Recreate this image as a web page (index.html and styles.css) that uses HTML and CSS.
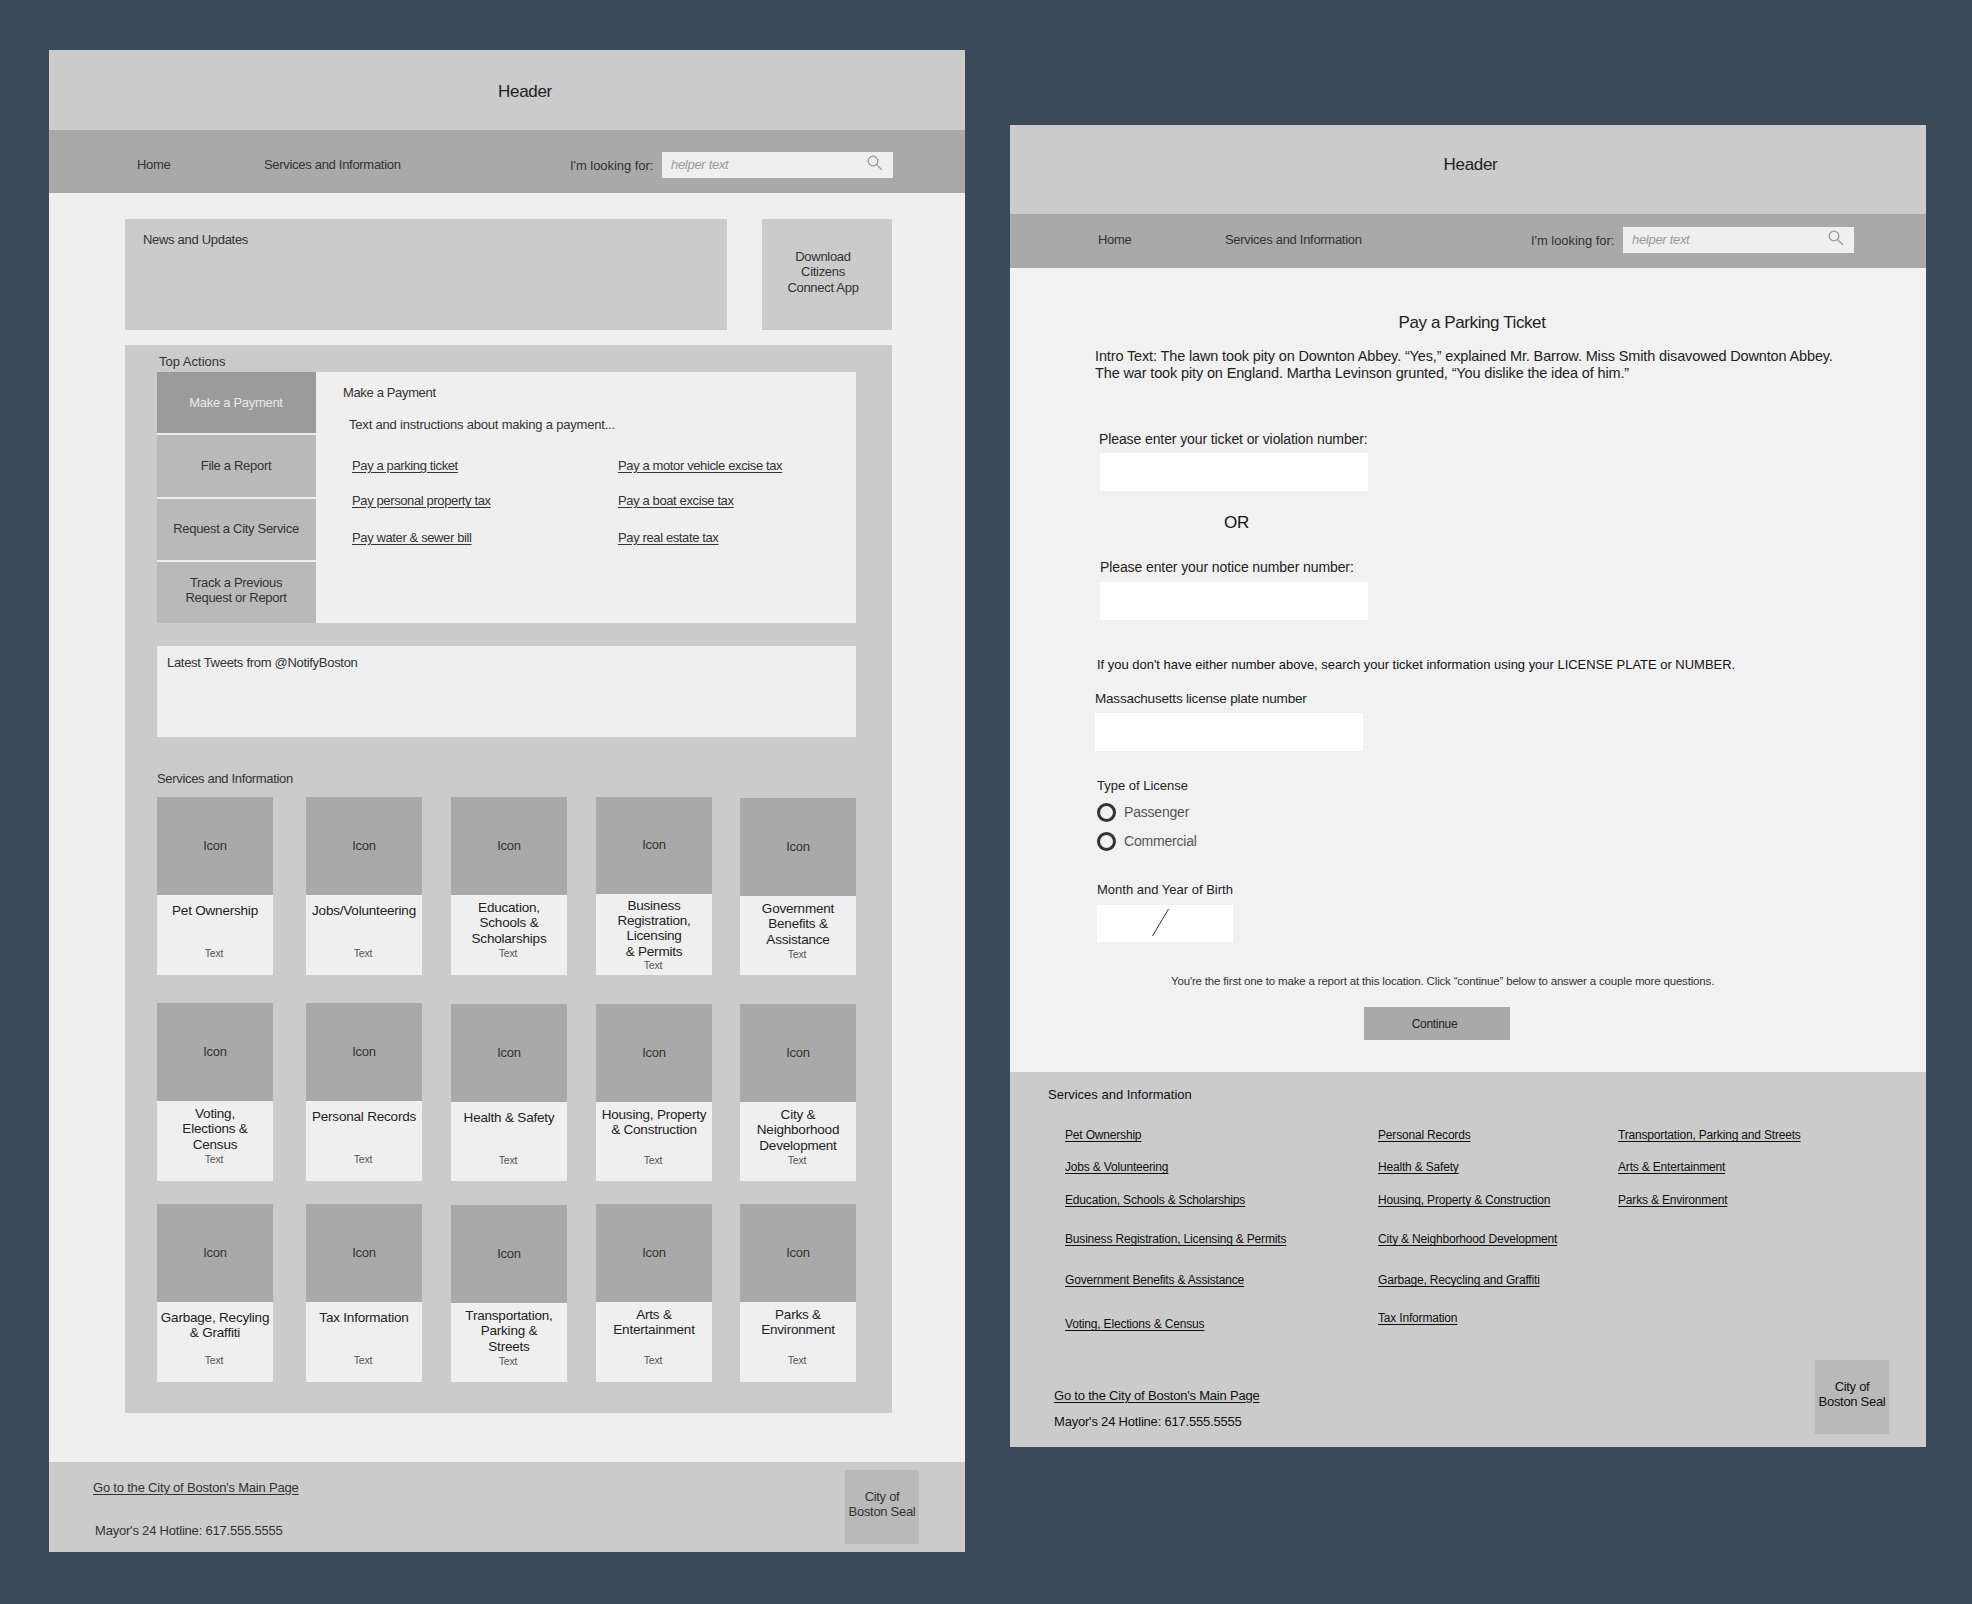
FILE: index.html
```html
<!doctype html>
<html lang="en">
    <head>
        <meta charset="UTF-8" />
        <meta name="viewport" content="width=device-width, initial-scale=1.0" />
        <title>City of Boston Wireframes</title>
        <link rel="stylesheet" href="styles.css">
    </head>
    <body>
        <!-- Home page -->
        <div class="page home">
            <header class="masthead">Header</header>
            <nav class="topnav">
                <a class="nav-home">Home</a>
                <a class="nav-services">Services and Information</a>
                <span class="nav-label">I'm looking for:</span>
                <div class="search">
                    <input type="text" placeholder="helper text" />
                    <svg width="16" height="16" viewBox="0 0 16 16">
                        <circle cx="6" cy="6" r="4.8" />
                        <line x1="9.5" y1="9.5" x2="15" y2="15" />
                    </svg>
                </div>
            </nav>

            <main class="home-main">
                <div class="promo-row">
                    <section class="news">News and Updates</section>
                    <section class="download">Download<br />Citizens<br />Connect App</section>
                </div>

                <section class="panel">
                    <h2 class="top-label">Top Actions</h2>
                    <div class="actions">
                        <div class="tabs">
                            <div class="tab active">Make a Payment</div>
                            <div class="tab">File a Report</div>
                            <div class="tab tab-request">Request a City Service</div>
                            <div class="tab tab-track">Track a Previous<br />Request or Report</div>
                        </div>
                        <div class="tab-pane">
                            <h3>Make a Payment</h3>
                            <p>Text and instructions about making a payment...</p>
                            <div class="pay-links">
                                <a>Pay a parking ticket</a>
                                <a>Pay personal property tax</a>
                                <a>Pay water &amp; sewer bill</a>
                                <a>Pay a motor vehicle excise tax</a>
                                <a>Pay a boat excise tax</a>
                                <a>Pay real estate tax</a>
                            </div>
                        </div>
                    </div>

                    <div class="tweets">Latest Tweets from @NotifyBoston</div>

                    <h2 class="services-label">Services and Information</h2>
                    <div class="cards">
                        <div class="card"><div class="icon">Icon</div><div class="card-body"><h4 class="one-line">Pet Ownership</h4><span>Text</span></div></div>
                        <div class="card"><div class="icon">Icon</div><div class="card-body"><h4 class="one-line">Jobs/Volunteering</h4><span>Text</span></div></div>
                        <div class="card"><div class="icon">Icon</div><div class="card-body"><h4>Education,<br />Schools &amp;<br />Scholarships</h4><span>Text</span></div></div>
                        <div class="card"><div class="icon">Icon</div><div class="card-body tall"><h4>Business<br />Registration,<br />Licensing<br />&amp; Permits</h4><span>Text</span></div></div>
                        <div class="card nudge"><div class="icon">Icon</div><div class="card-body"><h4>Government<br />Benefits &amp;<br />Assistance</h4><span>Text</span></div></div>

                        <div class="card"><div class="icon">Icon</div><div class="card-body"><h4>Voting,<br />Elections &amp;<br />Census</h4><span>Text</span></div></div>
                        <div class="card"><div class="icon">Icon</div><div class="card-body"><h4 class="one-line">Personal Records</h4><span>Text</span></div></div>
                        <div class="card nudge"><div class="icon">Icon</div><div class="card-body"><h4 class="one-line">Health &amp; Safety</h4><span>Text</span></div></div>
                        <div class="card nudge"><div class="icon">Icon</div><div class="card-body"><h4>Housing, Property<br />&amp; Construction</h4><span>Text</span></div></div>
                        <div class="card nudge"><div class="icon">Icon</div><div class="card-body"><h4>City &amp;<br />Neighborhood<br />Development</h4><span>Text</span></div></div>

                        <div class="card"><div class="icon">Icon</div><div class="card-body"><h4 class="one-line">Garbage, Recyling<br />&amp; Graffiti</h4><span>Text</span></div></div>
                        <div class="card"><div class="icon">Icon</div><div class="card-body"><h4 class="one-line">Tax Information</h4><span>Text</span></div></div>
                        <div class="card nudge"><div class="icon">Icon</div><div class="card-body"><h4>Transportation,<br />Parking &amp;<br />Streets</h4><span>Text</span></div></div>
                        <div class="card"><div class="icon">Icon</div><div class="card-body"><h4>Arts &amp;<br />Entertainment</h4><span>Text</span></div></div>
                        <div class="card"><div class="icon">Icon</div><div class="card-body"><h4>Parks &amp;<br />Environment</h4><span>Text</span></div></div>
                    </div>
                </section>
            </main>

            <footer class="home-footer">
                <div class="contact">
                    <a>Go to the City of Boston's Main Page</a>
                    <span class="hotline">Mayor's 24 Hotline: 617.555.5555</span>
                </div>
                <div class="seal">City of<br />Boston Seal</div>
            </footer>
        </div>

        <!-- Parking ticket page -->
        <div class="page ticket">
            <header class="masthead">Header</header>
            <nav class="topnav">
                <a class="nav-home">Home</a>
                <a class="nav-services">Services and Information</a>
                <span class="nav-label">I'm looking for:</span>
                <div class="search">
                    <input type="text" placeholder="helper text" />
                    <svg width="16" height="16" viewBox="0 0 16 16">
                        <circle cx="6" cy="6" r="4.8" />
                        <line x1="9.5" y1="9.5" x2="15" y2="15" />
                    </svg>
                </div>
            </nav>

            <main class="ticket-main">
                <h1>Pay a Parking Ticket</h1>
                <p class="intro">Intro Text: The lawn took pity on Downton Abbey. “Yes,” explained Mr. Barrow. Miss Smith disavowed Downton Abbey.<br />The war took pity on England. Martha Levinson grunted, “You dislike the idea of him.”</p>

                <label class="label-ticket" for="ticketNumber">Please enter your ticket or violation number:</label>
                <input class="field field-ticket" type="text" id="ticketNumber" />

                <div class="or">OR</div>

                <label class="label-notice" for="noticeNumber">Please enter your notice number number:</label>
                <input class="field field-notice" type="text" id="noticeNumber" />

                <p class="search-note">If you don't have either number above, search your ticket information using your LICENSE PLATE or NUMBER.</p>

                <label class="label-plate" for="plateNumber">Massachusetts license plate number</label>
                <input class="field field-plate" type="text" id="plateNumber" />

                <div class="label-type">Type of License</div>
                <div class="radio"><i></i>Passenger</div>
                <div class="radio radio-last"><i></i>Commercial</div>

                <div class="label-birth">Month and Year of Birth</div>
                <div class="birth-box">
                    <svg width="17" height="27" viewBox="0 0 17 27"><line x1="16.5" y1="0" x2="0.5" y2="27" /></svg>
                </div>

                <p class="first-note">You're the first one to make a report at this location. Click “continue” below to answer a couple more questions.</p>
                <button class="continue" type="button">Continue</button>
            </main>

            <footer class="ticket-footer">
                <h2>Services and Information</h2>
                <div class="footer-links">
                    <a>Pet Ownership</a>
                    <a>Jobs &amp; Volunteering</a>
                    <a>Education, Schools &amp; Scholarships</a>
                    <a>Business Registration, Licensing &amp; Permits</a>
                    <a>Government Benefits &amp; Assistance</a>
                    <a>Voting, Elections &amp; Census</a>
                    <a>Personal Records</a>
                    <a>Health &amp; Safety</a>
                    <a>Housing, Property &amp; Construction</a>
                    <a>City &amp; Neighborhood Development</a>
                    <a>Garbage, Recycling and Graffiti</a>
                    <a class="raise">Tax Information</a>
                    <a>Transportation, Parking and Streets</a>
                    <a>Arts &amp; Entertainment</a>
                    <a>Parks &amp; Environment</a>
                </div>
                <div class="footer-bottom">
                    <div class="contact">
                        <a>Go to the City of Boston's Main Page</a>
                        <span>Mayor's 24 Hotline: 617.555.5555</span>
                    </div>
                    <div class="seal">City of<br />Boston Seal</div>
                </div>
            </footer>
        </div>
    </body>
</html>
```

FILE: styles.css
```css
* {
    box-sizing: border-box;
    margin: 0;
    padding: 0;
}

body {
    font-family: 'Liberation Sans', Arial, sans-serif;
    font-size: 13px;
    line-height: 17px;
    letter-spacing: -0.3px;
    color: #333;
    background-color: #3c495a;
    width: 1972px;
    height: 1604px;
    overflow: hidden;
    display: flex;
    align-items: flex-start;
    gap: 45px;
    padding: 50px 46px 0 49px;
}

a {
    text-decoration: underline;
    text-underline-offset: 2px;
}

h1, h2, h3, h4 {
    font-weight: normal;
}

.page {
    width: 916px;
    flex-shrink: 0;
}

/* masthead + nav */
.masthead {
    background-color: #cbcbcb;
    text-align: center;
    font-size: 17px;
    letter-spacing: -0.3px;
    color: #222;
}

.topnav {
    background-color: #a9a9a9;
    display: flex;
    align-items: flex-start;
    padding-left: 88px;
}

.nav-home {
    width: 127px;
    padding-top: 4px;
    text-decoration: none;
}

.nav-services {
    width: 306px;
    padding-top: 4px;
    text-decoration: none;
}

.nav-label {
    width: 92px;
    margin-top: 1px;
    padding-top: 4px;
    letter-spacing: -0.05px;
}

.search {
    width: 231px;
    height: 26px;
    background-color: #efefef;
    display: flex;
    align-items: center;
    padding: 0 10px 0 9px;
}

.search input {
    flex: 1;
    min-width: 0;
    border: none;
    outline: none;
    background: transparent;
    font-family: inherit;
    font-size: 13px;
    font-style: italic;
    letter-spacing: -0.3px;
    margin-top: -2px;
}

.search input::placeholder {
    color: #999;
}

.search svg {
    fill: none;
    stroke: #9a9a9a;
    stroke-width: 1.3;
    margin-top: -4px;
}

/* home page */
.home .masthead {
    height: 80px;
    padding: 33px 0 0 36px;
}

.home .topnav {
    height: 63px;
    padding-top: 22px;
}

.home-main {
    background-color: #efefef;
    padding: 26px 73px 49px 76px;
}

.promo-row {
    display: flex;
    gap: 35px;
    height: 111px;
}

.news {
    width: 602px;
    background-color: #cbcbcb;
    padding: 12px 18px;
}

.download {
    width: 130px;
    background-color: #cbcbcb;
    text-align: center;
    line-height: 15.4px;
    padding: 30px 8px 0 0;
}

.panel {
    background-color: #cbcbcb;
    margin-top: 15px;
    padding: 10px 36px 31px 32px;
}

.top-label {
    font-size: 13px;
    line-height: 14px;
    letter-spacing: 0;
    margin: 0 0 3px 2px;
}

.actions {
    display: flex;
    height: 251px;
    background-color: #efefef;
}

.tabs {
    width: 159px;
    display: flex;
    flex-direction: column;
    gap: 2px;
}

.tab {
    height: 61.5px;
    background-color: #b9b9b9;
    display: flex;
    align-items: center;
    justify-content: center;
    text-align: center;
    line-height: 15px;
    padding-right: 1px;
}

.tab.active {
    background-color: #9b9b9b;
    color: #e9e9e9;
}

.tab-request {
    padding-bottom: 1px;
}

.tab-track {
    padding-bottom: 4px;
}

.tab-pane {
    flex: 1;
    padding: 12px 0 0 27px;
}

.tab-pane h3 {
    font-size: 13px;
    letter-spacing: -0.35px;
}

.tab-pane p {
    margin: 15px 0 0 6px;
    letter-spacing: -0.2px;
}

.pay-links {
    display: grid;
    grid-auto-flow: column;
    grid-template-rows: 35px 37px 17px;
    grid-template-columns: 266px auto;
    justify-items: start;
    margin: 24px 0 0 9px;
    letter-spacing: -0.38px;
}

.tweets {
    background-color: #efefef;
    height: 91px;
    margin-top: 23px;
    padding: 8px 10px;
}

.services-label {
    font-size: 13px;
    line-height: 14px;
    letter-spacing: -0.33px;
    margin: 35px 0 11px;
}

.cards {
    display: grid;
    grid-template-columns: 149px 145px 145px 144px 116px;
    grid-template-rows: 206px 201px 178px;
}

.card {
    width: 116px;
    height: 178px;
    background-color: #efefef;
    display: flex;
    flex-direction: column;
}

.card.nudge {
    height: 177px;
    margin-top: 1px;
}

.icon {
    height: 98px;
    padding-bottom: 1px;
    background-color: #a9a9a9;
    display: flex;
    align-items: center;
    justify-content: center;
}

.card-body {
    flex: 1;
    display: flex;
    flex-direction: column;
    align-items: center;
    text-align: center;
    padding: 5px 0 15px;
    letter-spacing: -0.2px;
}

.nudge .card-body {
    padding-bottom: 14px;
}

.card-body h4 {
    font-size: 13.5px;
    line-height: 15.3px;
    color: #222;
}

.card-body h4.one-line {
    padding-top: 3px;
}

.card-body span {
    margin: auto 2px 0 0;
    font-size: 10.5px;
    line-height: 13px;
    color: #555;
}

.card-body.tall {
    padding: 4px 0 3px;
}

.home-footer {
    background-color: #cbcbcb;
    height: 90px;
    display: flex;
    justify-content: space-between;
    padding: 8px 46px 0 44px;
}

.home-footer .contact {
    padding-top: 9px;
    gap: 26px;
}

.hotline {
    margin-left: 2px;
}

.contact {
    display: flex;
    flex-direction: column;
    align-items: flex-start;
    letter-spacing: -0.2px;
}

.seal {
    width: 74px;
    height: 74px;
    background-color: #b9b9b9;
    display: flex;
    align-items: center;
    justify-content: center;
    text-align: center;
    line-height: 15px;
    padding-bottom: 7px;
}

/* parking ticket page */
.ticket {
    margin-top: 75px;
}

.ticket .masthead {
    height: 89px;
    padding: 31px 0 0 5px;
}

.ticket .topnav {
    height: 54px;
    padding-top: 13px;
}

.ticket-main {
    background-color: #f1f1f1;
    height: 804px;
    padding: 45px 0 0 85px;
    display: flex;
    flex-direction: column;
    align-items: flex-start;
    color: #222;
}

.ticket-main h1 {
    width: 754px;
    font-size: 17px;
    line-height: 20px;
    letter-spacing: -0.4px;
    text-align: center;
}

.intro {
    font-size: 14.5px;
    letter-spacing: -0.14px;
    margin-top: 15px;
}

.field {
    border: none;
    outline: none;
    background-color: #fff;
    width: 268px;
    height: 38px;
}

.label-ticket,
.label-notice {
    font-size: 14px;
    letter-spacing: -0.1px;
}

.label-ticket {
    margin: 49px 0 0 4px;
}

.field-ticket {
    margin: 5px 0 0 5px;
}

.or {
    font-size: 17px;
    line-height: 20px;
    letter-spacing: -0.3px;
    color: #111;
    margin: 22px 0 0 129px;
}

.label-notice {
    margin: 26px 0 0 5px;
}

.field-notice {
    margin: 6px 0 0 5px;
}

.search-note {
    margin: 36px 0 0 2px;
    color: #111;
    letter-spacing: -0.02px;
}

.label-plate {
    font-size: 13.5px;
    letter-spacing: -0.2px;
    margin-top: 17px;
}

.field-plate {
    margin-top: 6px;
}

.label-type {
    letter-spacing: 0;
    margin: 26px 0 0 2px;
}

.radio {
    display: flex;
    align-items: center;
    gap: 8px;
    margin: 9px 0 0 2px;
    font-size: 14px;
    letter-spacing: -0.2px;
    color: #555;
}

.radio-last {
    margin-top: 10px;
}

.radio i {
    width: 19px;
    height: 19px;
    border: 3px solid #333;
    border-radius: 50%;
}

.label-birth {
    letter-spacing: 0;
    margin: 30px 0 0 2px;
}

.birth-box {
    width: 136px;
    height: 37px;
    background-color: #fff;
    margin: 7px 0 0 2px;
    padding: 4px 0 0 55px;
}

.birth-box svg {
    display: block;
    stroke: #333;
    stroke-width: 1;
}

.first-note {
    font-size: 11.5px;
    line-height: 15px;
    letter-spacing: -0.17px;
    margin: 32px 0 0 76px;
    color: #333;
}

.continue {
    width: 146px;
    height: 33px;
    margin: 18px 0 0 269px;
    padding-right: 5px;
    border: none;
    background-color: #a9a9a9;
    font-family: inherit;
    font-size: 12px;
    letter-spacing: -0.3px;
    color: #222;
}

.ticket-footer {
    background-color: #cbcbcb;
    height: 375px;
    padding: 14px 37px 0 38px;
    color: #111;
}

.ticket-footer h2 {
    font-size: 13px;
    line-height: 17px;
    letter-spacing: 0;
}

.footer-links {
    display: grid;
    grid-auto-flow: column;
    grid-template-rows: 32px 33px 39px 41px 44px 16px;
    grid-template-columns: 313px 240px auto;
    justify-items: start;
    font-size: 12px;
    line-height: 16px;
    letter-spacing: -0.18px;
    margin: 24px 0 0 17px;
}

.footer-links .raise {
    margin-top: -6px;
}

.footer-bottom {
    display: flex;
    justify-content: space-between;
    margin-top: 28px;
}

.footer-bottom .contact {
    padding: 27px 0 0 6px;
    gap: 9px;
}
```
